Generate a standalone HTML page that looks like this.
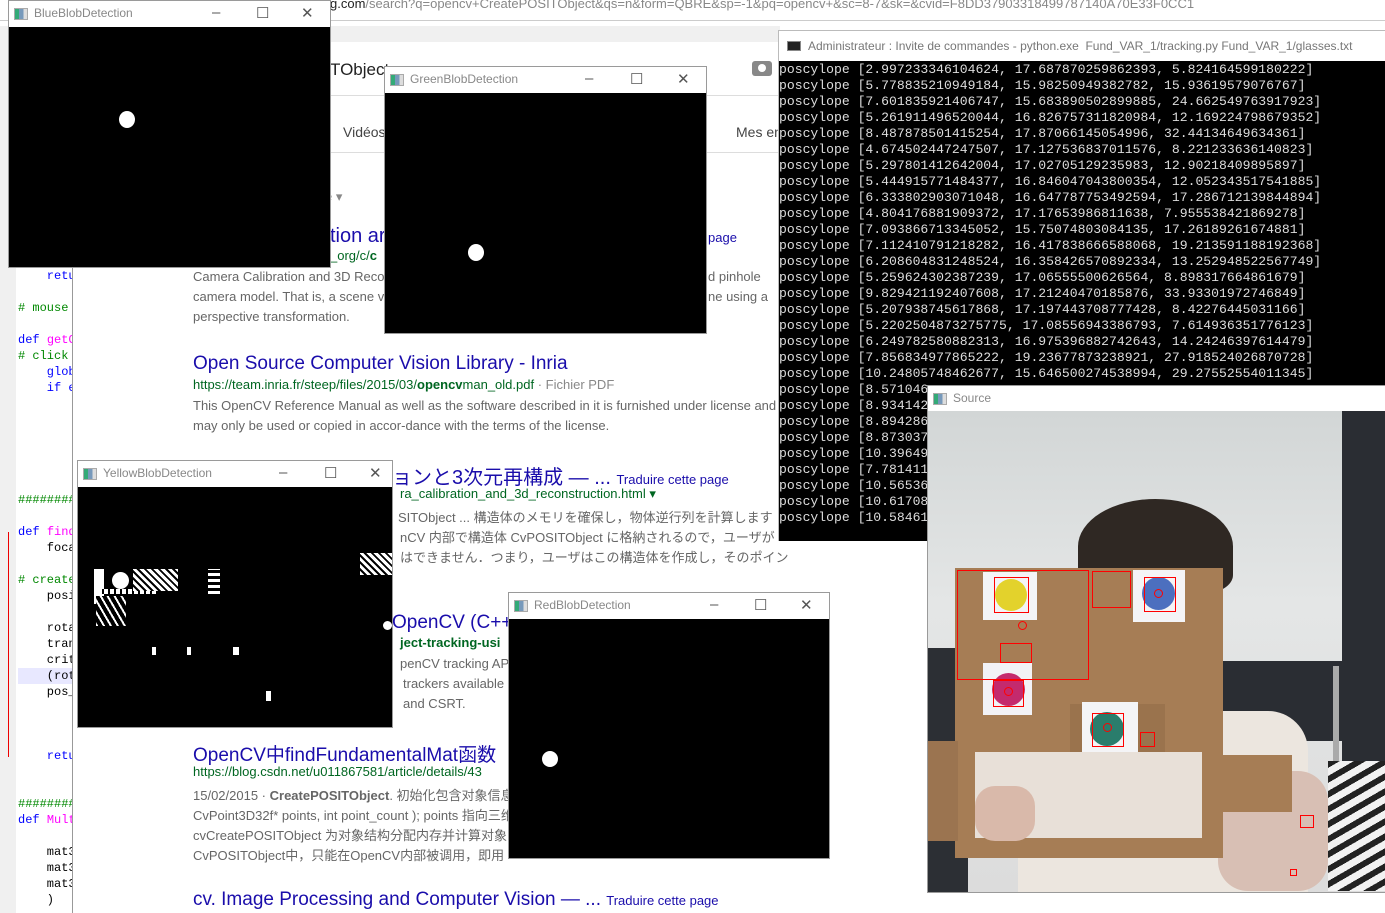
<!DOCTYPE html>
<html><head><meta charset="utf-8"><style>
*{margin:0;padding:0;box-sizing:border-box}
body{width:1385px;height:913px;overflow:hidden;background:#fff;position:relative;font-family:"Liberation Sans","Noto Sans CJK JP",sans-serif}
.a{position:absolute;white-space:nowrap}
.win{position:absolute;border:1px solid #9a9a9a;background:#fff}
.tb{height:26px;position:relative;background:#fff;font-size:12px;color:#888}
.tb .ic{position:absolute;left:5px;top:7px;width:14px;height:12px;border:1px solid #aaa;background:linear-gradient(90deg,#3a7 0 35%,#79b 35% 70%,#ddd 70%)}
.tb .t{position:absolute;left:25px;top:5px}
.tb .b{position:absolute;top:3px;font-size:15px;color:#555}
.blk{position:absolute;background:#000}
.dot{position:absolute;background:#fff;border-radius:50%}
.code{font-family:"Liberation Mono",monospace;font-size:12px;position:absolute;left:18px;white-space:nowrap}
.r{position:absolute;border:1px solid #f00}
.g{color:#006621}
.d{color:#666;font-size:13px}
.h{color:#1a0dab;font-size:19px}
</style></head><body>

<div class="a" style="left:330px;top:-4px;font-size:13px;color:#888"><span style="color:#222">g.com</span>/search?q=opencv+CreatePOSITObject&amp;qs=n&amp;form=QBRE&amp;sp=-1&amp;pq=opencv+&amp;sc=8-7&amp;sk=&amp;cvid=F8DD37903318499787140A70E33F0CC1</div>
<div class="a" style="left:0;top:20px;width:1385px;height:1px;background:#ccc"></div>
<div class="a" style="left:0;top:26px;width:780px;height:16px;background:#f0f0f0"></div>

<!-- code editor -->
<div class="a" style="left:0;top:42px;width:72px;height:871px;overflow:hidden">
<div class="a" style="left:0;top:0;width:16px;height:871px;background:#f0f0f0"></div>
<div class="a" style="left:8px;top:490px;width:1px;height:225px;background:#e00"></div>
<div class="code" style="top:227px;color:#00f">&nbsp;&nbsp;&nbsp;&nbsp;retu</div>
<div class="code" style="top:259px;color:#080"># mouse</div>
<div class="code" style="top:291px"><span style="color:#00f">def</span> <span style="color:#f0f">getC</span></div>
<div class="code" style="top:307px;color:#080"># click</div>
<div class="code" style="top:323px;color:#00f">&nbsp;&nbsp;&nbsp;&nbsp;glob</div>
<div class="code" style="top:339px;color:#00f">&nbsp;&nbsp;&nbsp;&nbsp;if e</div>
<div class="code" style="top:451px;color:#080">########</div>
<div class="code" style="top:483px"><span style="color:#00f">def</span> <span style="color:#f0f">find</span></div>
<div class="code" style="top:499px">&nbsp;&nbsp;&nbsp;&nbsp;foca</div>
<div class="code" style="top:531px;color:#080"># create</div>
<div class="code" style="top:547px">&nbsp;&nbsp;&nbsp;&nbsp;posi</div>
<div class="code" style="top:579px">&nbsp;&nbsp;&nbsp;&nbsp;rota</div>
<div class="code" style="top:595px">&nbsp;&nbsp;&nbsp;&nbsp;tran</div>
<div class="code" style="top:611px">&nbsp;&nbsp;&nbsp;&nbsp;crit</div>
<div class="a" style="left:18px;top:626px;width:54px;height:16px;background:#e8e8ff"></div>
<div class="code" style="top:627px">&nbsp;&nbsp;&nbsp;&nbsp;(rot</div>
<div class="code" style="top:643px">&nbsp;&nbsp;&nbsp;&nbsp;pos_</div>
<div class="code" style="top:707px;color:#00f">&nbsp;&nbsp;&nbsp;&nbsp;retu</div>
<div class="code" style="top:755px;color:#080">########</div>
<div class="code" style="top:771px"><span style="color:#00f">def</span> <span style="color:#f0f">Mult</span></div>
<div class="code" style="top:803px">&nbsp;&nbsp;&nbsp;&nbsp;mat3</div>
<div class="code" style="top:819px">&nbsp;&nbsp;&nbsp;&nbsp;mat3</div>
<div class="code" style="top:835px">&nbsp;&nbsp;&nbsp;&nbsp;mat3</div>
<div class="code" style="top:851px">&nbsp;&nbsp;&nbsp;&nbsp;)</div>
</div>
<div class="a" style="left:72px;top:42px;width:1px;height:871px;background:#999"></div>

<!-- browser content -->
<div class="a" style="left:330px;top:95px;width:450px;height:1px;background:#ddd"></div>
<div class="a" style="left:330px;top:152px;width:450px;height:1px;background:#ddd"></div>
<div class="a" style="left:330px;top:60px;font-size:17px;color:#222">TObject</div>
<div class="a" style="left:752px;top:61px;width:20px;height:15px;background:#888;border-radius:3px"><div style="position:absolute;left:6px;top:3px;width:8px;height:8px;border-radius:50%;background:#fff"></div></div>
<div class="a" style="left:343px;top:124px;font-size:14px;color:#444">Vidéos</div>
<div class="a" style="left:736px;top:124px;font-size:14px;color:#444">Mes en</div>
<div class="a" style="left:325px;top:189px;font-size:13px;color:#888">e ▾</div>
<div class="a h" style="left:330px;top:225px;font-size:20px">tion ar</div>
<div class="a" style="left:708px;top:230px;font-size:13px;color:#1a0dab">page</div>
<div class="a g" style="left:330px;top:248px;font-size:13px">_org/c/<b>c</b></div>
<div class="a d" style="left:193px;top:269px">Camera Calibration and 3D Reco</div>
<div class="a d" style="left:193px;top:289px">camera model. That is, a scene v</div>
<div class="a d" style="left:193px;top:309px">perspective transformation.</div>
<div class="a d" style="left:708px;top:269px">d pinhole</div>
<div class="a d" style="left:708px;top:289px">ne using a</div>

<div class="a h" style="left:193px;top:353px">Open Source Computer Vision Library - Inria</div>
<div class="a g" style="left:193px;top:377px;font-size:13px">https://team.inria.fr/steep/files/2015/03/<b>opencv</b>man_old.pdf <span style="color:#888">· Fichier PDF</span></div>
<div class="a d" style="left:193px;top:398px">This OpenCV Reference Manual as well as the software described in it is furnished under license and</div>
<div class="a d" style="left:193px;top:418px">may only be used or copied in accor-dance with the terms of the license.</div>

<div class="a h" style="left:392px;top:461px;font-size:20px">ョンと3次元再構成 — ... <span style="font-size:13px">Traduire cette page</span></div>
<div class="a g" style="left:400px;top:486px;font-size:13px">ra_calibration_and_3d_reconstruction.html ▾</div>
<div class="a d" style="left:398px;top:507px">SITObject ... 構造体のメモリを確保し，物体逆行列を計算します</div>
<div class="a d" style="left:400px;top:527px">nCV 内部で構造体 CvPOSITObject に格納されるので，ユーザが</div>
<div class="a d" style="left:400px;top:547px">はできません．つまり，ユーザはこの構造体を作成し，そのポイン</div>

<div class="a h" style="left:392px;top:612px">OpenCV (C++</div>
<div class="a g" style="left:400px;top:635px;font-size:13px"><b>ject-tracking-usi</b></div>
<div class="a d" style="left:400px;top:656px">penCV tracking AP</div>
<div class="a d" style="left:403px;top:676px">trackers available</div>
<div class="a d" style="left:403px;top:696px">and CSRT.</div>

<div class="a h" style="left:193px;top:740px">OpenCV中findFundamentalMat函数</div>
<div class="a g" style="left:193px;top:764px;font-size:13px">https://blog.csdn.net/u011867581/article/details/43</div>
<div class="a d" style="left:193px;top:785px">15/02/2015 · <b>CreatePOSITObject</b>. 初始化包含对象信息</div>
<div class="a d" style="left:193px;top:805px">CvPoint3D32f* points, int point_count ); points 指向三维</div>
<div class="a d" style="left:193px;top:825px">cvCreatePOSITObject 为对象结构分配内存并计算对象</div>
<div class="a d" style="left:193px;top:845px">CvPOSITObject中，只能在OpenCV内部被调用，即用</div>
<div class="a h" style="left:193px;top:889px">cv. Image Processing and Computer Vision — ... <span style="font-size:13px">Traduire cette page</span></div>

<div class="win" style="left:8px;top:0;width:323px;height:268px">
<div class="tb"><div class="ic"></div><div class="t">BlueBlobDetection</div><div class="b" style="left:203px">–</div><div class="b" style="left:247px">☐</div><div class="b" style="left:292px">✕</div></div>
<div class="blk" style="left:0;top:26px;width:321px;height:240px"></div>
<div class="dot" style="left:110px;top:110px;width:16px;height:17px"></div>
</div>

<div class="win" style="left:384px;top:66px;width:323px;height:268px">
<div class="tb"><div class="ic"></div><div class="t">GreenBlobDetection</div><div class="b" style="left:200px">–</div><div class="b" style="left:245px">☐</div><div class="b" style="left:292px">✕</div></div>
<div class="blk" style="left:0;top:26px;width:321px;height:240px"></div>
<div class="dot" style="left:83px;top:177px;width:16px;height:17px"></div>
</div>

<div class="win" style="left:778px;top:30px;width:610px;height:511px;border-color:#bbb">
<div style="height:30px;position:relative;font-size:12px;color:#777"><div style="position:absolute;left:8px;top:10px;width:14px;height:10px;background:#222;border:1px solid #888"></div><div style="position:absolute;left:29px;top:8px">Administrateur : Invite de commandes - python.exe&nbsp; Fund_VAR_1/tracking.py Fund_VAR_1/glasses.txt</div></div>
<div class="blk" style="left:0;top:30px;width:608px;height:480px;font-family:'Liberation Mono',monospace;font-size:13.1px;line-height:16px;color:#ddd;padding-top:1px;white-space:pre">poscylope [2.997233346104624, 17.687870259862393, 5.824164599180222]
poscylope [5.778835210949184, 15.98250949382782, 15.93619579076767]
poscylope [7.601835921406747, 15.683890502899885, 24.662549763917923]
poscylope [5.261911496520044, 16.826757311820984, 12.169224798679352]
poscylope [8.487878501415254, 17.87066145054996, 32.44134649634361]
poscylope [4.674502447247507, 17.127536837011576, 8.221233636140823]
poscylope [5.297801412642004, 17.02705129235983, 12.90218409895897]
poscylope [5.444915771484377, 16.846047043800354, 12.052343517541885]
poscylope [6.333802903071048, 16.647787753492594, 17.286712139844894]
poscylope [4.804176881909372, 17.17653986811638, 7.955538421869278]
poscylope [7.093866713345052, 15.75074803084135, 17.26189261674881]
poscylope [7.112410791218282, 16.417838666588068, 19.213591188192368]
poscylope [6.208604831248524, 16.358426570892334, 13.252948522567749]
poscylope [5.259624302387239, 17.06555500626564, 8.898317664861679]
poscylope [9.829421192407608, 17.21240470185876, 33.93301972746849]
poscylope [5.207938745617868, 17.197443708777428, 8.42276445031166]
poscylope [5.2202504873275775, 17.08556943386793, 7.614936351776123]
poscylope [6.249782580882313, 16.975396882742643, 14.24246397614479]
poscylope [7.856834977865222, 19.23677873238921, 27.918524026870728]
poscylope [10.24805748462677, 15.646500274538994, 29.27552554011345]
poscylope [8.571046
poscylope [8.934142
poscylope [8.894286
poscylope [8.873037
poscylope [10.39649
poscylope [7.781411
poscylope [10.56536
poscylope [10.61708
poscylope [10.58461</div>
</div>

<div class="win" style="left:927px;top:385px;width:460px;height:508px">
<div class="tb"><div class="ic"></div><div class="t">Source</div></div>
<div style="position:absolute;left:0;top:25px;width:458px;height:481px;overflow:hidden;background:linear-gradient(180deg,#d2d6d6,#e4e6e6 40%,#dcdcdc)">
 <div class="a" style="left:414px;top:0;width:50px;height:480px;background:#2a2d33"></div>
 <div class="a" style="left:0;top:237px;width:40px;height:250px;background:#2c2f34"></div>
 <div class="a" style="left:290px;top:250px;width:130px;height:80px;background:#2a2d33"></div>
 <div class="a" style="left:405px;top:255px;width:6px;height:120px;background:#aaa"></div>
 <div class="a" style="left:150px;top:88px;width:155px;height:95px;border-radius:50% 50% 20% 20%;background:#2f2823"></div>
 <div class="a" style="left:90px;top:300px;width:290px;height:185px;border-radius:40px 40px 0 0;background:#ece6df"></div>
 <div class="a" style="left:290px;top:360px;width:110px;height:120px;border-radius:30px;background:#d8bfb4"></div>
 <div class="a" style="left:400px;top:350px;width:60px;height:130px;background:repeating-linear-gradient(150deg,#222 0 6px,#f2f2f2 6px 13px)"></div>
 <div class="a" style="left:27px;top:157px;width:268px;height:290px;background:#a67d55"></div>
 <div class="a" style="left:0;top:330px;width:30px;height:100px;background:#9b7450"></div>
 <div class="a" style="left:294px;top:344px;width:70px;height:57px;background:#a67d55"></div>
 <div class="a" style="left:47px;top:341px;width:227px;height:86px;background:#e8e0d8"></div>
 <div class="a" style="left:47px;top:375px;width:60px;height:55px;border-radius:20px;background:#d9b9aa"></div>
 <div class="a" style="left:142px;top:293px;width:95px;height:48px;background:#9a734d"></div>
 <div class="a" style="left:55px;top:161px;width:54px;height:48px;background:#f4f4f6"></div>
 <div class="a" style="left:67px;top:168px;width:32px;height:32px;border-radius:50%;background:#e3d22c"></div>
 <div class="a" style="left:205px;top:159px;width:52px;height:52px;background:#f4f4f6"></div>
 <div class="a" style="left:214px;top:166px;width:33px;height:33px;border-radius:50%;background:#4c6fbf"></div>
 <div class="a" style="left:55px;top:252px;width:49px;height:52px;background:#f2f2f6"></div>
 <div class="a" style="left:64px;top:262px;width:33px;height:33px;border-radius:50%;background:#c42a6d"></div>
 <div class="a" style="left:154px;top:291px;width:56px;height:50px;background:#f4f4f6"></div>
 <div class="a" style="left:162px;top:301px;width:34px;height:34px;border-radius:50%;background:#2a7d6c"></div>
 <div class="r" style="left:29px;top:159px;width:132px;height:110px"></div>
 <div class="r" style="left:164px;top:160px;width:39px;height:37px"></div>
 <div class="r" style="left:66px;top:166px;width:35px;height:36px"></div>
 <div class="r" style="left:216px;top:166px;width:32px;height:35px"></div>
 <div class="r" style="left:72px;top:232px;width:32px;height:20px"></div>
 <div class="r" style="left:65px;top:269px;width:31px;height:27px"></div>
 <div class="r" style="left:164px;top:302px;width:32px;height:34px"></div>
 <div class="r" style="left:212px;top:321px;width:15px;height:15px"></div>
 <div class="r" style="left:372px;top:404px;width:14px;height:13px"></div>
 <div class="r" style="left:362px;top:458px;width:7px;height:7px"></div>
 <div class="r" style="left:90px;top:210px;width:9px;height:9px;border-radius:50%"></div>
 <div class="r" style="left:226px;top:178px;width:9px;height:9px;border-radius:50%"></div>
 <div class="r" style="left:76px;top:276px;width:9px;height:9px;border-radius:50%"></div>
 <div class="r" style="left:175px;top:312px;width:9px;height:9px;border-radius:50%"></div>
</div>
</div>

<div class="win" style="left:77px;top:460px;width:316px;height:268px">
<div class="tb"><div class="ic"></div><div class="t">YellowBlobDetection</div><div class="b" style="left:201px">–</div><div class="b" style="left:246px">☐</div><div class="b" style="left:291px">✕</div></div>
<div class="blk" style="left:0;top:26px;width:314px;height:240px"></div>
<div class="dot" style="left:34px;top:111px;width:17px;height:17px"></div>
<div class="a" style="left:16px;top:108px;width:10px;height:35px;background:#fff"></div>
<div class="a" style="left:20px;top:128px;width:60px;height:5px;background:repeating-linear-gradient(90deg,#fff 0 4px,#000 4px 6px)"></div>
<div class="a" style="left:55px;top:108px;width:45px;height:22px;background:repeating-linear-gradient(45deg,#fff 0 3px,#000 3px 5px)"></div>
<div class="a" style="left:130px;top:108px;width:12px;height:25px;background:repeating-linear-gradient(0deg,#fff 0 3px,#000 3px 6px)"></div>
<div class="a" style="left:18px;top:135px;width:30px;height:30px;background:repeating-linear-gradient(60deg,#fff 0 2px,#000 2px 6px)"></div>
<div class="a" style="left:282px;top:92px;width:32px;height:22px;background:repeating-linear-gradient(45deg,#fff 0 3px,#000 3px 5px)"></div>
<div class="a" style="left:74px;top:186px;width:4px;height:8px;background:#fff"></div>
<div class="a" style="left:109px;top:186px;width:4px;height:8px;background:#fff"></div>
<div class="a" style="left:155px;top:186px;width:6px;height:8px;background:#fff"></div>
<div class="a" style="left:188px;top:230px;width:5px;height:10px;background:#fff"></div>
<div class="a" style="left:305px;top:160px;width:9px;height:9px;border-radius:50%;background:#fff"></div>
</div>

<div class="win" style="left:508px;top:592px;width:322px;height:267px">
<div class="tb"><div class="ic"></div><div class="t">RedBlobDetection</div><div class="b" style="left:201px">–</div><div class="b" style="left:245px">☐</div><div class="b" style="left:291px">✕</div></div>
<div class="blk" style="left:0;top:26px;width:320px;height:239px"></div>
<div class="dot" style="left:33px;top:158px;width:16px;height:16px"></div>
</div>

</body></html>
